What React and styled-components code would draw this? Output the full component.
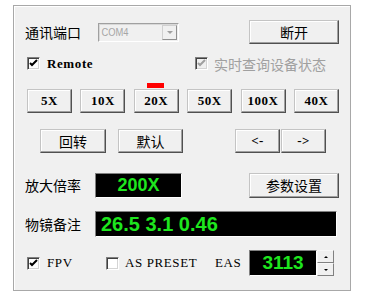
import React from 'react';
import styled, { createGlobalStyle } from 'styled-components';

const GlobalStyle = createGlobalStyle`
  body {
    margin: 0;
    background: #ffffff;
    font-family: "Noto Sans CJK SC", "Liberation Sans", sans-serif;
  }
`;

const Panel = styled.div`
  box-sizing: border-box;
  margin: 5px 0 0 13px;
  width: 338px;
  height: 286px;
  padding: 14px 11px 0 11px;
  background: #f0f0f0;
  border: 1px solid #a8a8a8;
  box-shadow: inset 1px 1px #ffffff;
  display: flex;
  flex-direction: column;
`;

const Row = styled.div`
  display: flex;
  align-items: center;
  height: ${p => p.h}px;
  margin-top: ${p => p.mt || 0}px;
  padding-left: ${p => p.pl || 0}px;
  justify-content: ${p => p.justify || 'flex-start'};
  flex-shrink: 0;
`;

const Cell = styled.div`
  display: flex;
  align-items: center;
  width: ${p => p.w}px;
  padding-left: ${p => p.pl || 0}px;
  box-sizing: border-box;
  flex-shrink: 0;
  white-space: nowrap;
`;

const Label = styled.span`
  font-size: 14px;
  line-height: 16px;
  color: #000;
  width: ${p => p.w || 'auto'};
  flex-shrink: 0;
`;

const Button = styled.button`
  box-sizing: border-box;
  width: ${p => p.w}px;
  height: ${p => p.h || 24}px;
  margin-left: ${p => (p.ml === 'auto' ? 'auto' : `${p.ml || 0}px`)};
  padding: 0 0 1px 0;
  background: #f0f0f0;
  border: 1px solid #c4c4c4;
  border-right-color: #505050;
  border-bottom-color: #505050;
  box-shadow: inset -1px -1px #a0a0a0, inset 1px 1px #ffffff;
  font-family: ${p => (p.mono ? '"Liberation Serif", serif' : '"Noto Sans CJK SC", sans-serif')};
  font-weight: ${p => (p.mono ? 700 : 400)};
  font-size: ${p => (p.mono ? 13 : 14)}px;
  letter-spacing: ${p => (p.mono ? '0.5px' : '0')};
  color: #000;
  flex-shrink: 0;
`;

const Combo = styled.div`
  box-sizing: border-box;
  width: 81px;
  height: 19px;
  margin-left: 17px;
  display: flex;
  align-items: center;
  border: 1px solid #a0a0a0;
  border-right-color: #ffffff;
  border-bottom-color: #ffffff;
  box-shadow: inset 1px 1px #d8d8d8;
  background: #f0f0f0;
`;

const ComboText = styled.span`
  flex: 1;
  padding-left: 3px;
  font-family: "Liberation Sans", sans-serif;
  font-size: 11px;
  color: #a6a6a6;
  transform: scaleX(0.85);
  transform-origin: left center;
`;

const ComboArrow = styled.div`
  box-sizing: border-box;
  width: 15px;
  height: 15px;
  margin-right: 1px;
  border: 1px solid #d0d0d0;
  border-right-color: #909090;
  border-bottom-color: #909090;
  display: flex;
  align-items: center;
  justify-content: center;
  &::after {
    content: '';
    border-left: 3px solid transparent;
    border-right: 3px solid transparent;
    border-top: 3px solid #a0a0a0;
  }
`;

const Check = styled.span`
  box-sizing: border-box;
  width: 13px;
  height: 13px;
  background: ${p => (p.disabled ? '#f0f0f0' : '#ffffff')};
  border: 1px solid #808080;
  border-right-color: #ffffff;
  border-bottom-color: #ffffff;
  box-shadow: inset 1px 1px #404040, inset -1px -1px #d4d4d4;
  display: flex;
  align-items: center;
  justify-content: center;
  flex-shrink: 0;
`;

const CheckMark = ({ color }) => (
  <svg width="9" height="9" viewBox="0 0 9 9">
    <path d="M1 4 L3 6 L8 1" fill="none" stroke={color} strokeWidth="2" />
  </svg>
);

const SerifText = styled.span`
  font-family: "Liberation Serif", serif;
  font-size: 13px;
  font-weight: ${p => (p.bold ? 700 : 400)};
  letter-spacing: 0.6px;
  margin-left: ${p => p.ml || 0}px;
  color: #000;
`;

const GrayText = styled.span`
  font-size: 14px;
  color: #a0a0a0;
  margin-left: 6px;
`;

const RedMark = styled.div`
  width: 17px;
  height: 5px;
  margin: 12px 0 0 122px;
  background: #ff0000;
  flex-shrink: 0;
`;

const Display = styled.div`
  box-sizing: border-box;
  width: ${p => p.w}px;
  height: ${p => p.h}px;
  margin-left: ${p => p.ml || 0}px;
  background: #000;
  border: 1px solid #808080;
  border-right-color: #ffffff;
  border-bottom-color: #ffffff;
  display: flex;
  align-items: center;
  justify-content: ${p => (p.center ? 'center' : 'flex-start')};
  padding-left: ${p => p.pad || 0}px;
  font-family: "Liberation Sans", Arial, sans-serif;
  font-weight: 700;
  font-size: ${p => p.fs}px;
  color: #1ee61e;
  flex-shrink: 0;
`;

const Spin = styled.div`
  display: flex;
  height: 26px;
`;

const SpinButtons = styled.div`
  width: 17px;
  display: flex;
  flex-direction: column;
  background: #f0f0f0;
`;

const SpinBtn = styled.div`
  box-sizing: border-box;
  flex: 1;
  border: 1px solid #f8f8f8;
  border-right-color: #808080;
  border-bottom-color: #808080;
  display: flex;
  align-items: center;
  justify-content: center;
  &::after {
    content: '';
    border-left: 2px solid transparent;
    border-right: 2px solid transparent;
    ${p => (p.up ? 'border-bottom: 2px solid #000;' : 'border-top: 2px solid #000;')}
  }
`;

export default function App() {
  return (
    <>
      <GlobalStyle />
      <Panel>
        <Row h={24}>
          <Label w="56px">通讯端口</Label>
          <Combo>
            <ComboText>COM4</ComboText>
            <ComboArrow />
          </Combo>
          <Button w={90} ml="auto">断开</Button>
        </Row>

        <Row h={15} mt={12}>
          <Cell w={170} pl={2}>
            <Check><CheckMark color="#000" /></Check>
            <SerifText bold ml={7}>Remote</SerifText>
          </Cell>
          <Cell w={144}>
            <Check disabled><CheckMark color="#a0a0a0" /></Check>
            <GrayText>实时查询设备状态</GrayText>
          </Cell>
        </Row>

        <RedMark />

        <Row h={24} mt={1} pl={2} justify="space-between">
          {['5X', '10X', '20X', '50X', '100X', '40X'].map(t => (
            <Button key={t} w={45} mono>{t}</Button>
          ))}
        </Row>

        <Row h={24} mt={16} pl={15}>
          <Button w={66}>回转</Button>
          <Button w={65} ml={12}>默认</Button>
          <Button w={45} ml={52} mono>{'<-'}</Button>
          <Button w={45} ml={1} mono>{'->'}</Button>
        </Row>

        <Row h={26} mt={19}>
          <Label w="70px">放大倍率</Label>
          <Display w={87} h={25} fs={18} center>200X</Display>
          <Button w={90} h={25} ml="auto">参数设置</Button>
        </Row>

        <Row h={26} mt={13}>
          <Label w="70px">物镜备注</Label>
          <Display w={242} h={26} fs={20} pad={5}>26.5 3.1 0.46</Display>
        </Row>

        <Row h={26} mt={13}>
          <Cell w={81} pl={2}>
            <Check><CheckMark color="#000" /></Check>
            <SerifText ml={7}>FPV</SerifText>
          </Cell>
          <Cell w={109}>
            <Check />
            <SerifText ml={6}>AS PRESET</SerifText>
          </Cell>
          <Cell w={34}>
            <SerifText>EAS</SerifText>
          </Cell>
          <Spin>
            <Display w={68} h={26} fs={19} center>3113</Display>
            <SpinButtons>
              <SpinBtn up />
              <SpinBtn />
            </SpinButtons>
          </Spin>
        </Row>
      </Panel>
    </>
  );
}
